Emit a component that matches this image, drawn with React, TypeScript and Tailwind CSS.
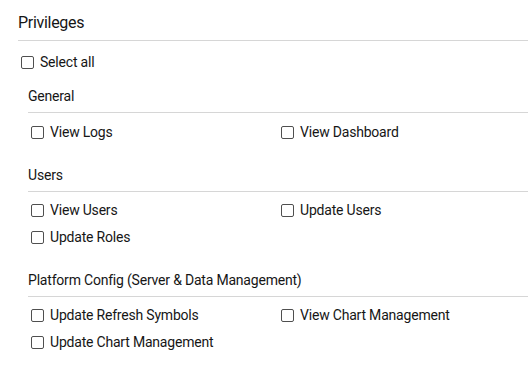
import React from "react";

type Section = { title: string; items: string[] };

const sections: Section[] = [
  { title: "General", items: ["View Logs", "View Dashboard"] },
  { title: "Users", items: ["View Users", "Update Users", "Update Roles"] },
  {
    title: "Platform Config (Server & Data Management)",
    items: ["Update Refresh Symbols", "View Chart Management", "Update Chart Management"],
  },
];

function Check({ label }: { label: string }) {
  return (
    <label className="flex h-[20px] items-center pl-[3px]">
      <span className="box-border h-[13px] w-[13px] shrink-0 rounded-[2px] border border-[#4f4f4f] bg-white" />
      <span className="ml-[6px] whitespace-nowrap text-[14px] leading-[20px] tracking-[-0.2px] text-[#161616]">
        {label}
      </span>
    </label>
  );
}

export default function App() {
  return (
    <div
      className="h-[371px] w-[528px] overflow-hidden bg-white pl-[18px] text-[#161616]"
      style={{ fontFamily: "Roboto, 'Liberation Sans', sans-serif" }}
    >
      <div className="border-b border-[#d6d6d6] pb-[5px] pt-[11px] text-[16px] leading-[24px] tracking-[-0.3px]">
        Privileges
      </div>
      <div className="mt-[11px]">
        <Check label="Select all" />
      </div>
      <div className="ml-[10px] flex flex-col gap-[23px] pt-[14px]">
        {sections.map((s, i) => (
          <div key={s.title}>
            <div className="border-b border-[#d6d6d6] pb-[6px] text-[14px] leading-[20px] tracking-[-0.2px]">
              {s.title}
            </div>
            <div
              className={
                i === 0
                  ? "grid grid-cols-2 gap-y-[7px] pt-[9px]"
                  : "grid grid-cols-2 gap-y-[7px] pt-[8px]"
              }
            >
              {s.items.map((it) => (
                <Check key={it} label={it} />
              ))}
            </div>
          </div>
        ))}
      </div>
    </div>
  );
}
